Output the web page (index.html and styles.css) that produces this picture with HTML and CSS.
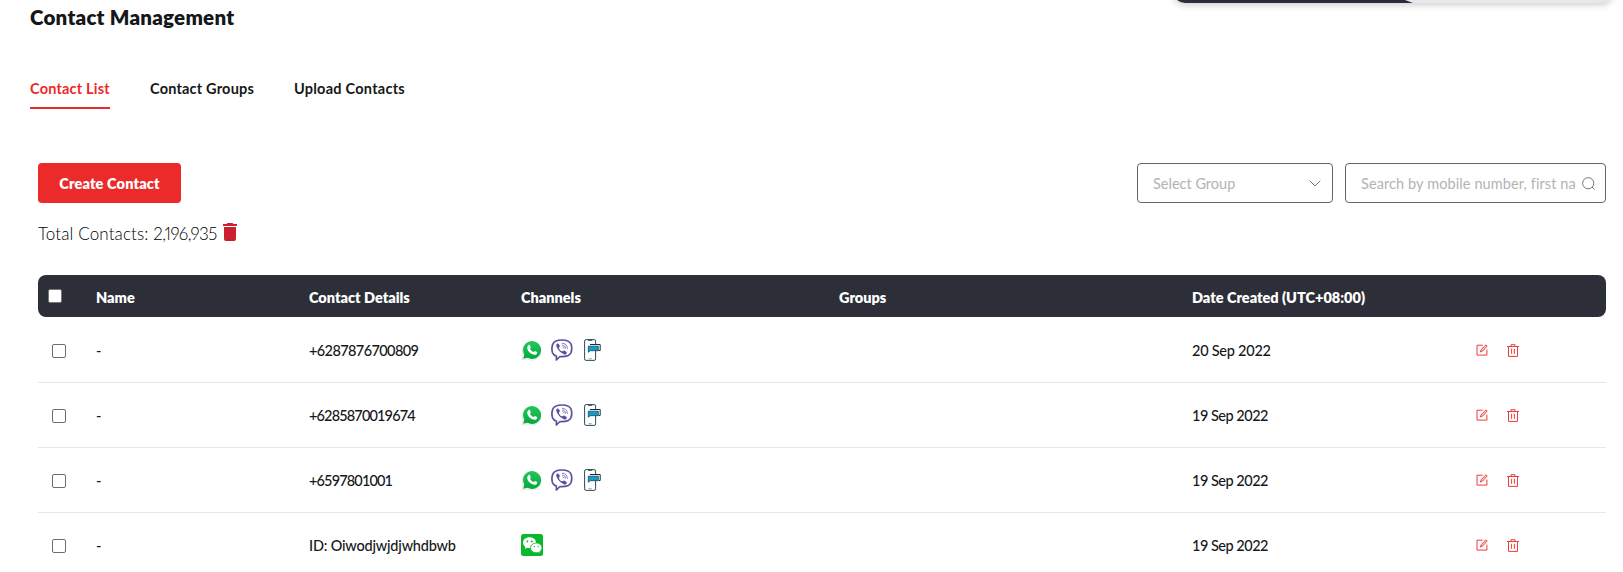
FILE: index.html
```html
<!DOCTYPE html>
<html lang="en">
<head>
<meta charset="utf-8">
<title>Contact Management</title>
<link rel="stylesheet" href="styles.css">
</head>
<body>
<svg class="defs" aria-hidden="true">
  <defs>
    <linearGradient id="wa-green" x1="0" y1="0" x2="0" y2="1"><stop offset="0" stop-color="#20c85a"/><stop offset="1" stop-color="#07a83c"/></linearGradient>
    <symbol id="whatsapp" viewBox="0 0 22 22">
      <path d="M.8 21.2 2.4 16A9.3 9.3 0 1 1 6 19.8z" fill="#fff" stroke="#dedede" stroke-width=".8"/>
      <path d="M2.2 19.8 3.3 15.600A9 9 0 1 1 6.500 18.800z" fill="url(#wa-green)"/>
      <path d="M7.400 6.200c.5-.5 1.200-.5 1.500.1l.9 2c.2.500-.7 1.200-.8 1.500.7 1.600 2 2.700 3.500 3.300.4 0 1-1.200 1.500-1.100l2 1c.6.300.1 1.700-.5 2.200-1.200.9-2.900.6-4.700-.3-2.200-1.100-4-3.100-4.500-5.200-.2-1.300.1-2.600 1.100-3.500z" fill="#fff"/>
    </symbol>
    <symbol id="viber" viewBox="0 0 22 22">
      <path d="M11 1C5 1 2.700 2.500 1.600 5.500c-.9 3.200-.9 6.300.1 8.600.7 1.500 2 2.400 3.700 2.900v4l3.600-3.500c5.700.3 9.400-.5 10.900-3.700 1-2.500 1-6 .2-8.600C19 2.300 16.300 1 11 1z" fill="#fff" stroke="#5f4f9f" stroke-width="1.700" stroke-linejoin="round"/>
      <path d="M6 4.700c.6-.5 1.200-.3 1.700.4l1 1.500c.6 1-.7 1.500-.7 2.300.3 1.700 1.600 3 3.200 3.400.9 0 1.200-1.300 2.200-.8l2 1.400c.8.700.5 1.300-.2 2.100-.8.800-1.600.8-2.900.1-3.300-1.500-5.800-4.500-7-8-.2-1 .1-1.800.7-2.400z" fill="#5f4f9f"/>
      <path d="M11.300 4.200c3 .1 5 2 5.100 5.200M11.500 6.100c1.900.2 2.900 1.200 3 3.100M11.800 7.800c.7.100 1.100.5 1.100 1.200" fill="none" stroke="#6b5ca8" stroke-width=".8" stroke-linecap="round"/>
    </symbol>
    <symbol id="sms" viewBox="0 0 17 22">
      <rect x=".6" y=".6" width="11" height="20.800" rx="1.500" fill="#fff" stroke="#2d4d57"/>
      <path d="M4 1.200h4.200" stroke="#2d4d57" stroke-width="1.200"/>
      <path d="M4.500 19.800h3.300" stroke="#819299" stroke-width=".9"/>
      <path d="M6 5.500h10.200v6h-1.500" fill="#fff" stroke="#17313b"/>
      <path d="M4.300 7.200h10v4.500H6.200l-1.900 1.500z" fill="#159bcb" stroke="#16495b" stroke-width=".8"/>
    </symbol>
    <symbol id="wechat" viewBox="0 0 22 22">
      <rect width="22" height="22" rx="2.500" fill="#09b82c"/>
      <path d="M8.500 3.300c-3.700 0-6.500 2.400-6.500 5.400 0 1.700.9 3.200 2.400 4.200L3.800 15l2.400-1.200c.8.200 1.500.3 2.300.3 3.700 0 6.500-2.400 6.500-5.400s-2.800-5.400-6.500-5.400z" fill="#fff"/>
      <path d="M15.300 9c-3.200 0-5.800 2.100-5.800 4.900s2.600 4.900 5.800 4.900c.7 0 1.400-.1 2-.3l1.900 1-.5-1.800c1.400-.9 2.300-2.300 2.300-3.800C21 11.100 18.500 9 15.300 9z" fill="#fff" stroke="#09b82c" stroke-width=".8"/>
      <g fill="#09a32c"><circle cx="6.400" cy="7.400" r=".9"/><circle cx="10.800" cy="7.400" r=".9"/><circle cx="13.400" cy="12.600" r=".7"/><circle cx="17.200" cy="12.600" r=".7"/></g>
    </symbol>
    <symbol id="edit" viewBox="0 0 12 12">
      <path d="M6.700 1.200H1v9.900h9.900V5.600" fill="none" stroke="#ee3b3b" stroke-width="1"/>
      <path d="M4.400 8 5 5.900 9.900.8l1.300 1.300L6.400 7.300z" fill="#fbc4c4" stroke="#ee3b3b" stroke-width=".9"/>
    </symbol>
    <symbol id="bin" viewBox="0 0 12 13">
      <path d="M0 2.500h12M4 2.300V.7h4v1.600M1.500 2.500v9.900h9V2.500M4.600 4.800v5M7.400 4.800v5" fill="none" stroke="#ee3b3b" stroke-width="1"/>
    </symbol>
  </defs>
</svg>
<div class="switcher"><div class="switcher-active"></div></div>
<main class="page">
  <h1 class="title"><span>Contact Management</span></h1>
  <nav class="tabs">
    <a class="tab tab-active"><span>Contact List</span></a>
    <a class="tab tab-groups"><span>Contact Groups</span></a>
    <a class="tab tab-upload"><span>Upload Contacts</span></a>
  </nav>
  <section class="content">
    <div class="toolbar">
      <button class="create"><span>Create Contact</span></button>
      <div class="filters">
        <div class="field select"><span class="ph">Select Group</span>
          <svg class="chevron" viewBox="0 0 12 7"><path d="M.7.7 6 6 11.300.7" fill="none" stroke="#777" stroke-width="1"/></svg></div>
        <div class="field search"><span class="ph ph-search">Search by mobile number, first na</span>
          <svg class="lens" viewBox="0 0 13 13"><circle cx="6.200" cy="6.200" r="5.600" fill="none" stroke="#777"/><path d="m10 10 2.600 2.600" stroke="#777"/></svg></div>
      </div>
    </div>
    <div class="total"><span class="total-text">Total Contacts: <span class="total-count">2,196,935</span></span>
      <svg class="total-bin" viewBox="0 0 14 18"><path d="M0 1h3.500l1-1h5l1 1H14v2H0zM1 4h12v12a2 2 0 0 1-2 2H3a2 2 0 0 1-2-2z" fill="#cc1f2f"/></svg></div>
    <div class="table">
      <div class="row head"><i class="box"></i><span>Name</span><span>Contact Details</span><span>Channels</span><span>Groups</span><span>Date Created (UTC+08:00)</span></div>
      <div class="row"><i class="box"></i><span>-</span><span class="phone-a">+6287876700809</span><div class="channels"><svg><use href="#whatsapp"/></svg><svg><use href="#viber"/></svg><svg class="phone"><use href="#sms"/></svg></div><span></span><span class="date date-wide">20 Sep 2022</span><div class="actions"><svg class="edit"><use href="#edit"/></svg><svg class="bin"><use href="#bin"/></svg></div></div>
      <div class="row"><i class="box"></i><span>-</span><span class="phone-b">+6285870019674</span><div class="channels"><svg><use href="#whatsapp"/></svg><svg><use href="#viber"/></svg><svg class="phone"><use href="#sms"/></svg></div><span></span><span class="date">19 Sep 2022</span><div class="actions"><svg class="edit"><use href="#edit"/></svg><svg class="bin"><use href="#bin"/></svg></div></div>
      <div class="row"><i class="box"></i><span>-</span><span class="phone-b">+6597801001</span><div class="channels"><svg><use href="#whatsapp"/></svg><svg><use href="#viber"/></svg><svg class="phone"><use href="#sms"/></svg></div><span></span><span class="date">19 Sep 2022</span><div class="actions"><svg class="edit"><use href="#edit"/></svg><svg class="bin"><use href="#bin"/></svg></div></div>
      <div class="row"><i class="box"></i><span>-</span><span class="user-id">ID: Oiwodjwjdjwhdbwb</span><div class="channels"><svg><use href="#wechat"/></svg></div><span></span><span class="date">19 Sep 2022</span><div class="actions"><svg class="edit"><use href="#edit"/></svg><svg class="bin"><use href="#bin"/></svg></div></div>
    </div>
  </section>
</main>
</body>
</html>
```
FILE: styles.css
```css
* { box-sizing: border-box; }
body { margin: 0; height: 572px; overflow: hidden; background: #fff; color: #151719; font: 14px/20px Lato, "Open Sans", sans-serif; position: relative; }
svg { display: block; flex: none; }
.defs { position: absolute; width: 0; height: 0; }
.switcher { position: absolute; top: -37px; left: 1173px; width: 440px; height: 40px; border-radius: 12px; background: #e6e7ec; box-shadow: 0 2px 7px rgba(0,0,0,.2); overflow: visible; }
.switcher-active { width: 240px; height: 40px; background: #2d2e39; border-radius: 12px 0 0 12px; clip-path: polygon(0 0, 228px 0, 232px 37px, 240px 40px, 0 40px); }
.page { padding: 3px 17px 0 30px; }
.title { margin: 0; height: 28px; font-size: 20.500px; line-height: 29px; font-weight: 800; letter-spacing: .25px; white-space: nowrap; }
.tabs { display: flex; gap: 40px; margin-top: 48px; height: 30px; font-size: 14.500px; font-weight: 700; letter-spacing: .2px; white-space: nowrap; }
.tab { height: 30px; line-height: 20px; width: 80px; }
.tab-groups { width: 104px; }
.tab-upload { width: 112px; letter-spacing: .25px; }
.tab-active { color: #eb2a2a; border-bottom: 2px solid #eb2a2a; }
.content { padding: 54px 0 0 8px; }
.toolbar { display: flex; justify-content: space-between; height: 40px; }
.create { width: 143px; height: 40px; padding: 1px 0 0; border: 0; border-radius: 4px; background: #eb2a2a; color: #fff; font: 800 14.500px/20px Lato, sans-serif; letter-spacing: .15px; white-space: nowrap; }
.filters { display: flex; gap: 12px; }
.field { display: flex; align-items: center; justify-content: space-between; height: 40px; border: 1px solid #666; border-radius: 4px; color: #b3b3b3; font-size: 14.500px; padding: 0 10px 0 15px; }
.select { width: 196px; }
.search { width: 261px; }
.ph { padding-top: 1px; }
.ph-search { letter-spacing: .1px; white-space: nowrap; }
.chevron { width: 12px; height: 7px; margin-right: 1px; }
.lens { width: 13px; height: 13px; }
.total { display: flex; align-items: center; gap: 6px; height: 24px; margin-top: 18px; font-size: 17px; font-weight: 300; color: #000; white-space: nowrap; }
.total-text { width: 179px; padding-top: 1px; letter-spacing: .12px; }
.total-count { font-variant-numeric: proportional-nums; letter-spacing: -.550px; }
.total-bin { width: 14px; height: 18px; margin-top: -2px; }
.table { margin-top: 30px; }
.row { display: grid; grid-template-columns: 58px 213px 212px 318px 353px 284px 1fr; align-items: center; height: 65px; border-bottom: 1px solid #e6e6f2; font-size: 14.500px; white-space: nowrap; font-weight: 500; }
.row span { padding-top: 1px; }
.head { height: 42px; margin-bottom: 1px; background: #2d2f38; color: #fff; border: 0; border-radius: 8px; font-weight: 800; }
.head span { padding-top: 3px; }
.box { display: block; width: 14px; height: 14px; margin: 2px 0 0 14px; border: 1px solid #6d6d6d; border-radius: 2px; background: #fff; }
.head .box { margin: 0 0 0 10px; border-color: #777; }
.phone-a { letter-spacing: -.6px; }
.phone-b { letter-spacing: -.85px; }
.user-id { letter-spacing: -.2px; }
.date { letter-spacing: -.5px; }
.date-wide { letter-spacing: -.25px; }
.channels { display: flex; gap: 8px; align-items: center; }
.channels svg { width: 22px; height: 22px; }
.channels .phone { width: 17px; margin-left: 3px; }
.actions { display: flex; align-items: center; gap: 19px; }
.edit { width: 12px; height: 12px; }
.bin { width: 12px; height: 13px; }
```
